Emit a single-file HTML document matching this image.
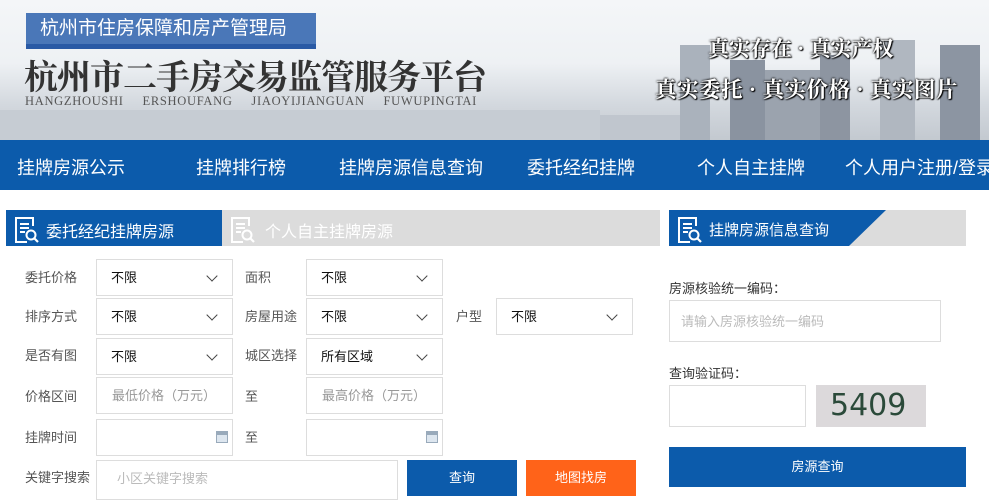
<!DOCTYPE html>
<html><head><meta charset="utf-8"><style>
*{margin:0;padding:0;box-sizing:border-box}
body{width:989px;height:492px;overflow:hidden;background:#fff;font-family:"Liberation Sans","Microsoft YaHei","Noto Sans CJK SC",sans-serif;position:relative}
.abs{position:absolute}
.hdr{left:0;top:0;width:989px;height:140px;background:linear-gradient(180deg,#f4f6f8 0%,#eef1f4 45%,#d3d8de 75%,#c3c9d0 100%);overflow:hidden}
.bld{position:absolute;bottom:0;background:#7d8795}
.nav{left:0;top:140px;width:989px;height:50px;background:#0c5bab;color:#fff;font-size:18px}
.nav span{position:absolute;top:14px;white-space:nowrap}
.lbl{font-size:13px;color:#555;position:absolute}
.box{position:absolute;border:1px solid #ddd;background:#fff;font-size:13px;color:#111;padding-left:14px;line-height:36px}
.sel::after{content:"";position:absolute;right:16px;top:12px;width:7px;height:7px;border-right:1.3px solid #444;border-bottom:1.3px solid #444;transform:rotate(45deg)}
.ph{color:#999}
.cal{position:absolute;right:4px;top:11px;width:12px;height:12px;background:linear-gradient(#9ab 0 3px,#dde6ef 3px);border:1px solid #9ab}
</style></head><body>
<div class="abs hdr">
 <div class="bld" style="left:680px;width:30px;height:95px;background:#aab2bc"></div>
 <div class="bld" style="left:730px;width:35px;height:80px;background:#8a93a0"></div>
 <div class="bld" style="left:765px;width:55px;height:70px;background:#9ba3ae"></div>
 <div class="bld" style="left:820px;width:30px;height:85px;background:#8d95a1"></div>
 <div class="bld" style="left:880px;width:35px;height:100px;background:#b0b7c0"></div>
 <div class="bld" style="left:940px;width:40px;height:95px;background:#8c95a2"></div>
 <div class="bld" style="left:600px;width:80px;height:25px;background:#c0c6ce"></div>
 <div class="bld" style="left:0;width:600px;height:30px;background:#c6ccd3"></div>
 <div class="abs" style="left:26px;top:13px;width:290px;height:36px;background:#4a77b8;border-bottom:5px solid #2a5aa5;color:#fff;font-size:19px;padding-left:14px;line-height:32px">杭州市住房保障和房产管理局</div>
 <div class="abs" style="left:24px;top:50px;font-family:'Noto Serif CJK SC',serif;font-size:34px;font-weight:bold;color:#333;letter-spacing:-1px;white-space:nowrap">杭州市二手房交易监管服务平台</div>
 <div class="abs" style="left:25px;top:94px;font-family:'Liberation Serif',serif;font-size:12.5px;color:#555;word-spacing:15px;letter-spacing:0.7px;white-space:nowrap">HANGZHOUSHI ERSHOUFANG JIAOYIJIANGUAN FUWUPINGTAI</div>
 <div class="abs" style="left:708px;top:33px;font-family:'Noto Serif CJK SC',serif;font-size:21px;font-weight:bold;color:#fff;text-shadow:0 0 2px #000,0 0 2px #000,1px 1px 1px #000;white-space:nowrap">真实存在 · 真实产权</div>
 <div class="abs" style="left:655px;top:73px;font-family:'Noto Serif CJK SC',serif;font-size:21.5px;font-weight:bold;color:#fff;text-shadow:0 0 2px #000,0 0 2px #000,1px 1px 1px #000;white-space:nowrap;letter-spacing:0.5px">真实委托 · 真实价格 · 真实图片</div>
</div>
<div class="abs nav">
 <span style="left:17px">挂牌房源公示</span><span style="left:196px">挂牌排行榜</span><span style="left:339px">挂牌房源信息查询</span><span style="left:527px">委托经纪挂牌</span><span style="left:697px">个人自主挂牌</span><span style="left:845px">个人用户注册/登录</span>
</div>

<svg width="0" height="0" style="position:absolute"><defs><symbol id="ic" viewBox="0 0 26 28"><path d="M19 10V2H2v24h11" fill="none" stroke="currentColor" stroke-width="2"/><path d="M6 8h9M6 12h9M6 16h5" stroke="currentColor" stroke-width="2"/><circle cx="17" cy="19" r="4.5" fill="none" stroke="currentColor" stroke-width="2"/><path d="M20 22l4 4" stroke="currentColor" stroke-width="2.2"/></symbol></defs></svg>

<div class="abs" style="left:6px;top:210px;width:216px;height:36px;background:#0c5bab;color:#fff;font-size:16px">
 <svg class="abs" style="left:8px;top:6px;color:#fff" width="26" height="28"><use href="#ic"/></svg>
 <span class="abs" style="left:40px;top:8px">委托经纪挂牌房源</span></div>
<div class="abs" style="left:222px;top:210px;width:438px;height:36px;background:#dcdcdc;color:#fff;font-size:16px">
 <svg class="abs" style="left:8px;top:6px;color:#fff" width="26" height="28"><use href="#ic"/></svg>
 <span class="abs" style="left:43px;top:8px">个人自主挂牌房源</span></div>

<span class="lbl" style="left:25px;top:267px">委托价格</span>
<div class="box sel" style="left:96px;top:259px;width:137px;height:37px">不限</div>
<span class="lbl" style="left:245px;top:267px">面积</span>
<div class="box sel" style="left:306px;top:259px;width:137px;height:37px">不限</div>

<span class="lbl" style="left:25px;top:306px">排序方式</span>
<div class="box sel" style="left:96px;top:298px;width:137px;height:37px">不限</div>
<span class="lbl" style="left:245px;top:306px">房屋用途</span>
<div class="box sel" style="left:306px;top:298px;width:137px;height:37px">不限</div>
<span class="lbl" style="left:456px;top:306px">户型</span>
<div class="box sel" style="left:496px;top:298px;width:137px;height:37px">不限</div>

<span class="lbl" style="left:25px;top:345px">是否有图</span>
<div class="box sel" style="left:96px;top:338px;width:137px;height:37px">不限</div>
<span class="lbl" style="left:245px;top:345px">城区选择</span>
<div class="box sel" style="left:306px;top:338px;width:137px;height:37px">所有区域</div>

<span class="lbl" style="left:25px;top:386px">价格区间</span>
<div class="box ph" style="left:96px;top:377px;width:137px;height:37px;padding-left:15px">最低价格（万元）</div>
<span class="lbl" style="left:245px;top:386px">至</span>
<div class="box ph" style="left:306px;top:377px;width:137px;height:37px;padding-left:15px">最高价格（万元）</div>

<span class="lbl" style="left:25px;top:427px">挂牌时间</span>
<div class="box" style="left:96px;top:419px;width:137px;height:37px"><i class="cal"></i></div>
<span class="lbl" style="left:245px;top:427px">至</span>
<div class="box" style="left:306px;top:419px;width:137px;height:37px"><i class="cal"></i></div>

<span class="lbl" style="left:25px;top:467px">关键字搜索</span>
<div class="box" style="left:96px;top:460px;width:302px;height:40px;color:#bbb;padding-left:20px">小区关键字搜索</div>
<div class="abs" style="left:407px;top:460px;width:110px;height:36px;background:#0c5bab;color:#fff;font-size:13px;text-align:center;line-height:36px">查询</div>
<div class="abs" style="left:526px;top:460px;width:110px;height:36px;background:#ff6319;color:#fff;font-size:13px;text-align:center;line-height:36px">地图找房</div>

<div class="abs" style="left:669px;top:210px;width:297px;height:36px;background:#dcdcdc;color:#fff;font-size:15px">
 <div class="abs" style="left:0;top:0;width:217px;height:36px;background:#0c5bab;clip-path:polygon(0 0,100% 0,180px 100%,0 100%)"></div>
 <svg class="abs" style="left:8px;top:6px;color:#fff" width="26" height="28"><use href="#ic"/></svg>
 <span class="abs" style="left:40px;top:9px">挂牌房源信息查询</span></div>
<span class="abs" style="left:669px;top:278px;font-size:13px;color:#333">房源核验统一编码：</span>
<div class="box" style="left:669px;top:300px;width:272px;height:42px;line-height:42px;color:#bbb;padding-left:11px">请输入房源核验统一编码</div>
<span class="abs" style="left:669px;top:363px;font-size:13px;color:#333">查询验证码：</span>
<div class="box" style="left:669px;top:385px;width:137px;height:42px"></div>
<div class="abs" style="left:816px;top:385px;width:110px;height:42px;background:#dcd9db;color:#2b4a3a;font-size:30px;line-height:42px;padding-left:14px;font-family:'DejaVu Sans',sans-serif">5409</div>
<div class="abs" style="left:669px;top:447px;width:297px;height:40px;background:#0c5bab;color:#fff;font-size:13px;text-align:center;line-height:40px">房源查询</div>
</body></html>
